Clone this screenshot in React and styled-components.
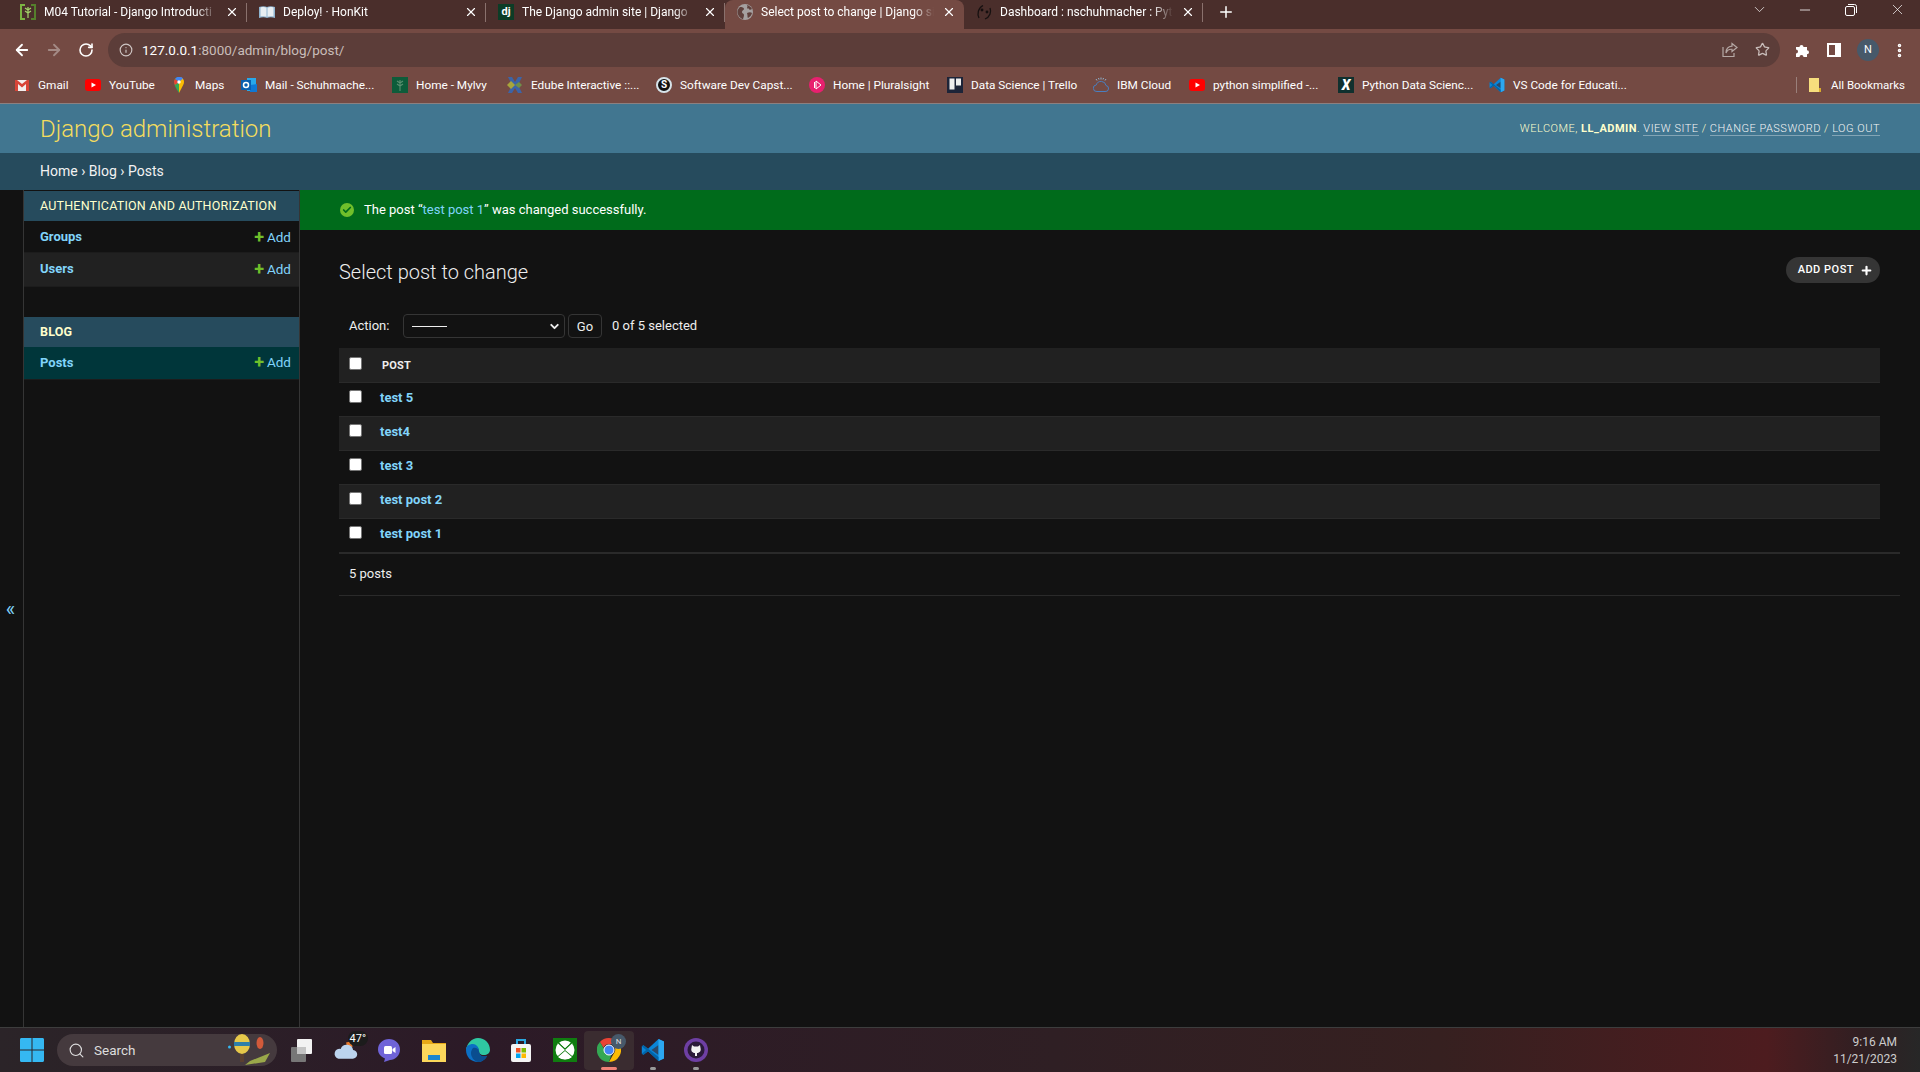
import React from "react";
import styled, { createGlobalStyle } from "styled-components";
import { ArrowLeft, ArrowRight, RotateCw, Info, Star, X, Plus, Minus, ChevronDown, EllipsisVertical, Search, Check } from "lucide-react";

const tabs = [
  { title: "M04 Tutorial - Django Introducti", icon: "tree" },
  { title: "Deploy! · HonKit", icon: "book" },
  { title: "The Django admin site | Django", icon: "dj" },
  { title: "Select post to change | Django si", icon: "globe", active: true },
  { title: "Dashboard : nschuhmacher : Pyt", icon: "swirl" },
];

const bookmarks = [
  { label: "Gmail", icon: "gmail", w: 71 },
  { label: "YouTube", icon: "youtube", w: 86 },
  { label: "Maps", icon: "maps", w: 70 },
  { label: "Mail - Schuhmache...", icon: "outlook", w: 151 },
  { label: "Home - Mylvy", icon: "mylvy", w: 115 },
  { label: "Edube Interactive ::...", icon: "edube", w: 149 },
  { label: "Software Dev Capst...", icon: "skype", w: 153 },
  { label: "Home | Pluralsight", icon: "pluralsight", w: 138 },
  { label: "Data Science | Trello", icon: "trello", w: 146 },
  { label: "IBM Cloud", icon: "ibm", w: 96 },
  { label: "python simplified -...", icon: "youtube", w: 149 },
  { label: "Python Data Scienc...", icon: "x", w: 151 },
  { label: "VS Code for Educati...", icon: "vscode", w: 200 },
];

const posts = ["test 5", "test4", "test 3", "test post 2", "test post 1"];

function Logo({ name, size = 16 }) {
  switch (name) {
    case "tree":
      return (
        <svg width={size} height={size} viewBox="0 0 16 16">
          <path d="M5 1H1v14h4" fill="none" stroke="#7cb342" strokeWidth="2" />
          <path d="M11 1h4v14h-4" fill="none" stroke="#55802c" strokeWidth="2" />
          <path d="M8 14V3M8 6 5 4M8 6l3-2M8 9 5 7M8 9l3-2" stroke="#a5d66b" strokeWidth="1.200" fill="none" />
        </svg>
      );
    case "book":
      return (
        <svg width={size} height={size} viewBox="0 0 16 16">
          <path d="M0 3c3-1 6-1 8 0 2-1 5-1 8 0v11c-3-1-6-1-8 0-2-1-5-1-8 0z" fill="#8fb4d0" />
          <path d="M1.500 3.500c2-.6 4.500-.6 6 .2v9c-1.500-.7-4-.7-6-.2zM14.500 3.500c-2-.6-4.500-.6-6 .2v9c1.500-.7 4-.7 6-.2z" fill="#e8eef2" />
        </svg>
      );
    case "globe":
      return (
        <svg width={size} height={size} viewBox="0 0 16 16">
          <circle cx="8" cy="8" r="8" fill="#a5a0a0" />
          <path d="M3 3c2 0 4 .5 4 2s-2 1-2 3 2 1 2 3-1 3-1 4.500C3 14 0 11 .5 7 1 5 2 4 3 3zM10 1c2 .5 4 2 5 4-1 1-3 1-3 0s-2 0-2-1 1-1 0-3zM10 9c2-1 4-1 5 0-.5 2-2 4-4 5-1-1 0-2-1-5z" fill="#5f403c" />
        </svg>
      );
    case "swirl":
      return (
        <svg width={size} height={size} viewBox="0 0 16 16" fill="none" stroke="#161010" strokeWidth="1.300">
          <path d="M3 14C1 10 2 4 7 1.500M14 4c1.500 4 0 9-5 11" />
          <circle cx="6" cy="6" r=".8" fill="#161010" />
          <circle cx="11" cy="8" r=".8" fill="#161010" />
        </svg>
      );
    case "gmail":
      return (
        <svg width={size} height={size} viewBox="0 0 16 16">
          <path d="M1 3h14v11H1z" fill="#f3efee" />
          <path d="M1 14V3h2l5 4 5-4h2v11h-3V7L8 10.500 4 7v7z" fill="#d84437" />
        </svg>
      );
    case "youtube":
      return (
        <svg width={size} height={size} viewBox="0 0 16 16">
          <rect y="2" width="16" height="12" rx="3" fill="#f00" />
          <path d="M6.500 5.500 11 8l-4.500 2.500z" fill="#fff" />
        </svg>
      );
    case "maps":
      return (
        <svg width={size} height={size} viewBox="0 0 16 16">
          <path d="M8 0C5 0 3 2.300 3 5c0 4 5 11 5 11z" fill="#34a853" />
          <path d="M8 0c3 0 5 2.300 5 5 0 1-.3 2-.8 3L8 16z" fill="#fbbc04" />
          <path d="M4 2a5 5 0 0 1 8-.5L8 5z" fill="#4285f4" />
          <path d="M3 5c0-1 .3-2 1-3l4 3-4 3c-.6-1-1-2-1-3z" fill="#ea4335" />
          <circle cx="8" cy="5" r="1.700" fill="#fff" />
        </svg>
      );
    case "outlook":
      return (
        <svg width={size} height={size} viewBox="0 0 16 16">
          <path d="M6 1h9v13H6z" fill="#28a8ea" />
          <path d="M9 8l7-1v8H9z" fill="#0f78d4" />
          <rect y="3" width="10" height="10" fill="#0a5fb0" />
          <circle cx="5" cy="8" r="2.500" fill="none" stroke="#fff" strokeWidth="1.500" />
        </svg>
      );
    case "mylvy":
      return (
        <svg width={size} height={size} viewBox="0 0 16 16">
          <path d="M0 0h16v16H0z" fill="#0d5c3a" />
          <path d="M8 14V3M8 6 5 4M8 6l3-2M8 9 5 7M8 9l3-2" stroke="#5b8f70" strokeWidth="1.100" fill="none" />
        </svg>
      );
    case "edube":
      return (
        <svg width={size} height={size} viewBox="0 0 16 16">
          <path d="M1 0h4l3 5 3-5h4l-4 8 4 8h-4l-3-5-3 5H1l4-8z" fill="#3c64a8" />
          <path d="M0 8l4-4 4 4-4 4z" fill="#a8a53c" />
          <path d="M8 8l4-3 3 3-3 3z" fill="#6f8f4a" />
        </svg>
      );
    case "pluralsight":
      return (
        <svg width={size} height={size} viewBox="0 0 16 16">
          <circle cx="8" cy="8" r="8" fill="#e8206f" />
          <path d="M5.500 5v6M7 4l5 4-5 4z" stroke="#fff" fill="none" />
        </svg>
      );
    case "trello":
      return (
        <svg width={size} height={size} viewBox="0 0 16 16">
          <rect width="16" height="16" fill="#1d2438" />
          <rect x="2.500" y="1.500" width="5" height="11" fill="#eee" />
          <rect x="9" y="1.500" width="5" height="7" fill="#eee" />
        </svg>
      );
    case "ibm":
      return (
        <svg width={size} height={size} viewBox="0 0 16 16" fill="none" stroke="#4a7fc0" strokeWidth="1">
          <path d="M4 14.500h8a3 3 0 0 0 1-6 5 5 0 0 0-9.700-.6A3.300 3.300 0 0 0 4 14.500z" />
          <path d="M8 .5v2M3 2l1 1.500M13 2l-1 1.500M5.500 1l.5 1.500M10.500 1 10 2.500" stroke="#8fb4d0" />
        </svg>
      );
    case "vscode":
      return (
        <svg width={size} height={size} viewBox="0 0 24 24">
          <path d="M17.500 1 23 3.600v16.800L17.500 23 7 13.200 2.500 16.700.8 15.800V8.200l1.700-.9L7 10.800z" fill="#0a84d6" />
          <path d="M17.500 7 10.500 12l7 5z" fill="#3a2f38" opacity=".7" />
          <path d="M17.500 1 23 3.600v16.800L17.500 23z" fill="#2ca7f0" />
          <path d="M.8 8.200 2.500 7.300 17.500 19v4L7 13.200 2.500 16.700.8 15.800l4.300-3.800z" fill="#0065a9" />
        </svg>
      );
    case "folder":
      return (
        <svg width={size} height={size} viewBox="0 0 16 16">
          <path d="M2 1h10v14H2z" fill="#f7de7d" />
          <path d="M12 11h2v4h-2z" fill="#d9ab2d" />
        </svg>
      );
    case "windows":
      return (
        <svg width={size} height={size} viewBox="0 0 24 24">
          <path d="M0 1.500C0 .6.600 0 1.500 0h10v11.500H0zM12.500 0h10c.9 0 1.500.6 1.500 1.500v10H12.500zM0 12.500h11.500V24h-10C.6 24 0 23.400 0 22.500zM12.500 12.500H24v10c0 .9-.6 1.500-1.500 1.500h-10z" fill="#35b8f2" />
        </svg>
      );
    case "balloon":
      return (
        <svg width={size} height={size} viewBox="0 0 44 32">
          <path d="M22 27l20-8-5 9-20 3z" fill="#9aa84a" />
          <ellipse cx="14" cy="10" rx="8" ry="10" fill="#e6c84a" />
          <path d="M6 8h16v4H6z" fill="#2f7fa8" />
          <path d="M12 20h4v8h-4z" fill="#5a4030" />
          <ellipse cx="32" cy="9" rx="3.500" ry="6" fill="#d25a3a" />
          <circle cx="1.500" cy="13" r="1.500" fill="#35b8f2" />
        </svg>
      );
    case "taskview":
      return (
        <svg width={size} height={size} viewBox="0 0 24 24">
          <rect x="7" y="1" width="15" height="15" rx="1" fill="#f2f2f2" />
          <rect x="1" y="9" width="15" height="15" rx="1" fill="#777" />
          <rect x="7" y="9" width="9" height="7" fill="#c4c4c4" />
        </svg>
      );
    case "cloud":
      return (
        <svg width={size} height={size} viewBox="0 0 24 24">
          <path d="M13 5l5-1 1 5-5 1z" fill="#e8792b" />
          <path d="M6 20h13a4 4 0 0 0 .5-8 6 6 0 0 0-11.500-1A4.500 4.500 0 0 0 6 20z" fill="#bcd4ee" />
        </svg>
      );
    case "teams":
      return (
        <svg width={size} height={size} viewBox="0 0 24 24">
          <path d="M12 1c6 0 11 4.500 11 10.500S18 22 13 22l-6 2 1-3.500C4 19 1 15.500 1 11.500 1 5.500 6 1 12 1z" fill="#6f63d8" />
          <rect x="7" y="8" width="8" height="8" rx="1.500" fill="#fff" />
          <path d="M15.500 11l3-2v6l-3-2z" fill="#fff" />
        </svg>
      );
    case "explorer":
      return (
        <svg width={size} height={size} viewBox="0 0 24 24">
          <path d="M0 2h9l2 3h13v19H0z" fill="#e6a817" />
          <path d="M0 6h24v18H0z" fill="#fbd75b" />
          <rect x="6" y="17" width="12" height="5" fill="#1a86d0" />
        </svg>
      );
    case "edge":
      return (
        <svg width={size} height={size} viewBox="0 0 24 24">
          <path d="M12 0c7 0 12 5 12 12 0 3-3 5-6 5-4 0-5-2-5-4 0-3-3-5-6-5-3 0-6 2-7 4C1 5 6 0 12 0z" fill="#2fc8a2" />
          <path d="M0 12c0-4 3-6 7-6 3 0 6 3 6 7 0 3 2 7 8 5-2 4-6 6-9 6-7 0-12-5-12-12z" fill="#0c6fc4" />
          <path d="M7 10c2-1 5 0 6 3 0 3 2 7 8 5-2 4-6 6-9 6-4-1-7-5-7-9 0-2 1-4 2-5z" fill="#0a4d8f" />
        </svg>
      );
    case "store":
      return (
        <svg width={size} height={size} viewBox="0 0 24 24">
          <path d="M8 6V2h8v4" fill="none" stroke="#2aa7e0" strokeWidth="2" />
          <rect x="2" y="6" width="20" height="18" rx="2" fill="#f4f4f4" />
          <path d="M7 10h4.500v4.500H7z" fill="#f25022" />
          <path d="M12.500 10H17v4.500h-4.500z" fill="#7fba00" />
          <path d="M7 15.500h4.500V20H7z" fill="#00a4ef" />
          <path d="M12.500 15.500H17V20h-4.500z" fill="#ffb900" />
        </svg>
      );
    case "xbox":
      return (
        <svg width={size} height={size} viewBox="0 0 24 24">
          <rect width="24" height="24" fill="#107c10" />
          <circle cx="12" cy="12" r="9.500" fill="#fff" />
          <path d="M4 3.500 12 11l8-7.500M3 20.500 12 13l9 7.500" fill="none" stroke="#107c10" strokeWidth="1.600" />
          <path d="M12 10 7 5.500h10zM5 19l7-6 7 6c-4 3-10 3-14 0z" fill="#fff" />
        </svg>
      );
    case "chrome":
      return (
        <svg width={size} height={size} viewBox="0 0 24 24">
          <path d="M12 0a12 12 0 0 1 10.400 6H12a6 6 0 0 0-5.600 3.800L2.900 4A12 12 0 0 1 12 0z" fill="#ea4335" />
          <path d="M22.400 6A12 12 0 0 1 12 24l4.500-8A6 6 0 0 0 17 8z" fill="#fbbc04" />
          <path d="M2.900 4l4.800 8a6 6 0 0 0 7 3.500L12 24A12 12 0 0 1 2.900 4z" fill="#34a853" />
          <circle cx="12" cy="12" r="5" fill="#4285f4" stroke="#fff" strokeWidth="1" />
        </svg>
      );
    case "github":
      return (
        <svg width={size} height={size} viewBox="0 0 24 24">
          <circle cx="12" cy="12" r="12" fill="#6e3fa3" />
          <circle cx="12" cy="12" r="8.500" fill="#2a1a38" />
          <path d="M8 7l2 1.500h4L16 7l.5 3c.8 2.500-.5 5-3.500 5v3h-2v-3c-3 0-4.300-2.500-3.500-5z" fill="#f2f2f2" />
        </svg>
      );
    default:
      return null;
  }
}

function Favicon({ name }) {
  if (name === "dj") return <DjIcon>dj</DjIcon>;
  if (name === "skype") return <SkypeIcon>S</SkypeIcon>;
  if (name === "x") return <XIcon>X</XIcon>;
  return <Logo name={name} />;
}

function App() {
  return (
    <>
      <GlobalStyle />
      <Page>
        <TabStrip>
          {tabs.map((tab) => (
            <Tab key={tab.title} $active={tab.active}>
              <Favicon name={tab.icon} />
              <TabTitle>{tab.title}</TabTitle>
              <X size={14} strokeWidth={2} color="#fff" />
            </Tab>
          ))}
          <NewTab>
            <Plus size={18} strokeWidth={2} />
          </NewTab>
          <WindowControls>
            <ChevronDown size={17} strokeWidth={1} />
            <Minus size={16} strokeWidth={1.2} />
            <RestoreIcon />
            <X size={17} strokeWidth={1} />
          </WindowControls>
        </TabStrip>

        <Toolbar>
          <NavButton><ArrowLeft size={18} strokeWidth={2.4} /></NavButton>
          <NavButton $off><ArrowRight size={18} strokeWidth={2.4} /></NavButton>
          <NavButton><RotateCw size={16} strokeWidth={2.4} /></NavButton>
          <Omnibox>
            <Info size={14} color="#cfc6c4" />
            <Url>
              127.0.0.1<UrlRest>:8000/admin/blog/post/</UrlRest>
            </Url>
            <OmniActions>
              <ShareIcon />
              <Star size={15} color="#c9bdba" strokeWidth={2} />
            </OmniActions>
          </Omnibox>
          <ToolIcons>
            <PuzzleIcon />
            <SidePanelIcon />
            <Avatar>N</Avatar>
            <EllipsisVertical size={17} strokeWidth={3} color="#fff" />
          </ToolIcons>
        </Toolbar>

        <BookmarkBar>
          {bookmarks.map((b) => (
            <Bookmark key={b.label} $w={b.w}>
              <Favicon name={b.icon} />
              <span>{b.label}</span>
            </Bookmark>
          ))}
          <AllBookmarks>
            <Logo name="folder" />
            <span>All Bookmarks</span>
          </AllBookmarks>
        </BookmarkBar>

        <Header>
          <Branding>Django administration</Branding>
          <UserTools>
            WELCOME, <strong>LL_ADMIN</strong>. <UserLink>View site</UserLink> / <UserLink>Change password</UserLink> / <UserLink>Log out</UserLink>
          </UserTools>
        </Header>
        <Breadcrumbs>Home › Blog › Posts</Breadcrumbs>

        <Main>
          <ToggleColumn>«</ToggleColumn>
          <Sidebar>
            <ModuleCaption>Authentication and Authorization</ModuleCaption>
            <ModuleRow>
              <ModelLink>Groups</ModelLink>
              <AddLink><GreenPlus>+</GreenPlus>Add</AddLink>
            </ModuleRow>
            <ModuleRow $alt>
              <ModelLink>Users</ModelLink>
              <AddLink><GreenPlus>+</GreenPlus>Add</AddLink>
            </ModuleRow>
            <ModuleCaption $bold $gap>Blog</ModuleCaption>
            <ModuleRow $selected>
              <ModelLink>Posts</ModelLink>
              <AddLink><GreenPlus>+</GreenPlus>Add</AddLink>
            </ModuleRow>
          </Sidebar>

          <Content>
            <Message>
              <MessageIcon><Check size={10} strokeWidth={4} color="#006b1b" /></MessageIcon>
              <MessageText>The post “<MessageLink>test post 1</MessageLink>” was changed successfully.</MessageText>
            </Message>
            <ContentInner>
              <ContentHead>
                <Title>Select post to change</Title>
                <AddButton>
                  <AddLabel>Add post</AddLabel>
                  <Plus size={13} strokeWidth={4} color="#fff" />
                </AddButton>
              </ContentHead>
              <Actions>
                <ActionLabel>Action:</ActionLabel>
                <SelectBox>
                  <SelectDash />
                  <ChevronDown size={13} strokeWidth={3.5} color="#eee" />
                </SelectBox>
                <GoButton>Go</GoButton>
                <Counter>0 of 5 selected</Counter>
              </Actions>
              <PostTable>
                <thead>
                  <HeadRow>
                    <CheckCell as="th" $head><FakeCheck /></CheckCell>
                    <HeadCell>Post</HeadCell>
                  </HeadRow>
                </thead>
                <tbody>
                  {posts.map((post, i) => (
                    <PostRow key={post} $alt={i % 2 === 1}>
                      <CheckCell><FakeCheck /></CheckCell>
                      <TitleCell>{post}</TitleCell>
                    </PostRow>
                  ))}
                </tbody>
              </PostTable>
              <Paginator>5 posts</Paginator>
            </ContentInner>
          </Content>
        </Main>

        <Taskbar>
          <TaskLeft>
            <Logo name="windows" size={24} />
            <SearchPill>
              <Search size={17} color="#ddd" strokeWidth={1.6} />
              <span>Search</span>
              <BalloonSlot><Logo name="balloon" size={44} /></BalloonSlot>
            </SearchPill>
            <TaskApp $w={36}><Logo name="taskview" size={24} /></TaskApp>
            <TaskApp $w={50}>
              <Logo name="cloud" size={26} />
              <WeatherBadge>47°</WeatherBadge>
            </TaskApp>
            <TaskApp $w={38}><Logo name="teams" size={24} /></TaskApp>
            <TaskApp $w={52}><Logo name="explorer" size={24} /></TaskApp>
            <TaskApp $w={36}><Logo name="edge" size={24} /></TaskApp>
            <TaskApp $w={50}><Logo name="store" size={24} /></TaskApp>
            <TaskApp $w={38}><Logo name="xbox" size={24} /></TaskApp>
            <TaskApp $w={50} $active>
              <Logo name="chrome" size={24} />
              <ChromeBadge>N</ChromeBadge>
              <RunDot $active />
            </TaskApp>
            <TaskApp $w={38}>
              <Logo name="vscode" size={24} />
              <RunDot />
            </TaskApp>
            <TaskApp $w={48}>
              <Logo name="github" size={24} />
              <RunDot />
            </TaskApp>
          </TaskLeft>
          <Clock>
            <div>9:16 AM</div>
            <div>11/21/2023</div>
          </Clock>
        </Taskbar>
      </Page>
    </>
  );
}

export default App;

function RestoreIcon() {
  return (
    <svg width="12" height="12" viewBox="0 0 12 12" fill="none" stroke="#fff" strokeWidth="1">
      <rect x=".5" y="2.500" width="9" height="9" rx="1.500" />
      <path d="M3 .5h6.500a2 2 0 0 1 2 2V9" />
    </svg>
  );
}

function ShareIcon() {
  return (
    <svg width="16" height="16" viewBox="0 0 16 16" fill="none" stroke="#b5a8a5" strokeWidth="1.200">
      <path d="M1 5v9.500h11V11" />
      <path d="M10 1.500 15 5.500l-5 4V7.300C7 7 5 8.500 4 11c0-4 2.500-6.500 6-6.800z" />
    </svg>
  );
}

function PuzzleIcon() {
  return (
    <svg width="16" height="16" viewBox="0 0 16 16" fill="#fff">
      <path d="M1 5h3.500a2 2 0 1 1 4 0H12v3.200a2 2 0 1 1 0 4V15H8.500a2 2 0 1 0-4 0H1v-3.500a2 2 0 1 0 0-4z" />
    </svg>
  );
}

function SidePanelIcon() {
  return (
    <svg width="14" height="14" viewBox="0 0 14 14">
      <path d="M0 0h14v14H0z" fill="#fff" />
      <path d="M2 2h6v10H2z" fill="#744a43" />
    </svg>
  );
}

const GlobalStyle = createGlobalStyle`
  * {
    box-sizing: border-box;
  }
  html, body {
    margin: 0;
    padding: 0;
    background: #121212;
    font-family: Roboto, "Liberation Sans", sans-serif;
  }
`;
const Page = styled.div`
  display: flex;
  flex-direction: column;
  height: 100vh;
  overflow: hidden;
`;
const TabStrip = styled.div`
  display: flex;
  align-items: stretch;
  height: 29px;
  padding-left: 8px;
  background: #4a2e2b;
`;
const Tab = styled.div`
  display: flex;
  align-items: center;
  gap: 8px;
  width: 239px;
  padding: 0 8px 5px 12px;
  color: #fff;
  font-size: 12px;
  background: ${(p) => (p.$active ? "#744a43" : "transparent")};
  border-radius: ${(p) => (p.$active ? "8px 8px 0 0" : "0")};
  position: relative;
  &:after {
    content: "";
    position: absolute;
    right: 0;
    top: 3px;
    bottom: 7px;
    border-right: 1px solid ${(p) => (p.$active ? "transparent" : "#8a716d")};
  }
`;
const TabTitle = styled.span`
  flex: 1;
  overflow: hidden;
  white-space: nowrap;
  mask-image: linear-gradient(90deg, #000 88%, transparent);
`;
const DjIcon = styled.span`
  width: 16px;
  height: 16px;
  background: #0c3c26;
  color: #fff;
  font-size: 11px;
  font-weight: 700;
  line-height: 15px;
  text-align: center;
  flex: none;
`;
const SkypeIcon = styled.span`
  width: 16px;
  height: 16px;
  border-radius: 50%;
  background: #111;
  border: 2px solid #d7e4ea;
  color: #fff;
  font-size: 10px;
  font-weight: 700;
  line-height: 12px;
  text-align: center;
  flex: none;
`;
const XIcon = styled.span`
  width: 16px;
  height: 16px;
  background: #10302e;
  color: #fff;
  font-size: 14px;
  font-weight: 900;
  font-style: italic;
  line-height: 16px;
  text-align: center;
  flex: none;
`;
const NewTab = styled.div`
  display: flex;
  align-items: center;
  margin-left: 14px;
  padding-bottom: 5px;
  color: #fff;
`;
const WindowControls = styled.div`
  margin-left: auto;
  display: grid;
  grid-template-columns: repeat(4, 46px);
  justify-items: center;
  align-items: center;
  width: 184px;
  color: #fff;
  height: 19px;
`;
const Toolbar = styled.div`
  display: flex;
  align-items: center;
  height: 38px;
  padding: 4px 0 0 6px;
  background: #744a43;
`;
const NavButton = styled.div`
  width: 32px;
  display: flex;
  justify-content: center;
  color: ${(p) => (p.$off ? "#a48a85" : "#fff")};
`;
const Omnibox = styled.div`
  flex: 1;
  display: flex;
  align-items: center;
  height: 34px;
  margin-left: 6px;
  padding: 0 10px 0 11px;
  gap: 9px;
  background: #5c3d39;
  border-radius: 17px;
`;
const Url = styled.div`
  color: #fff;
  font-size: 13.5px;
`;
const UrlRest = styled.span`
  color: #c9bdba;
`;
const OmniActions = styled.div`
  margin-left: auto;
  display: flex;
  gap: 17px;
`;
const ToolIcons = styled.div`
  display: flex;
  align-items: center;
  gap: 16px;
  width: 140px;
  padding-left: 15px;
`;
const Avatar = styled.div`
  width: 22px;
  height: 22px;
  margin-right: -4px;
  border-radius: 50%;
  background: #47596a;
  color: #fff;
  font-size: 11px;
  line-height: 22px;
  text-align: center;
`;
const BookmarkBar = styled.div`
  display: flex;
  align-items: center;
  height: 37px;
  padding-left: 14px;
  background: #744a43;
  border-bottom: 1px solid #8c8080;
`;
const Bookmark = styled.div`
  display: flex;
  align-items: center;
  gap: 8px;
  width: ${(p) => p.$w}px;
  color: #fff;
  font-size: 11.8px;
  white-space: nowrap;
`;
const AllBookmarks = styled(Bookmark)`
  width: auto;
  margin-left: auto;
  margin-right: 15px;
  padding-left: 10px;
  height: 16px;
  font-size: 11.5px;
  border-left: 1px solid #9a7f7a;
`;
const Header = styled.div`
  display: flex;
  align-items: center;
  justify-content: space-between;
  height: 49px;
  padding: 0 40px;
  background: #417690;
`;
const Branding = styled.div`
  color: #f5dd5d;
  font-size: 24px;
  font-weight: 300;
`;
const UserTools = styled.div`
  color: #ffc;
  font-size: 11px;
  letter-spacing: 0.5px;
  font-weight: 300;
  strong {
    font-weight: 700;
  }
`;
const UserLink = styled.span`
  color: #f5f5f5;
  text-transform: uppercase;
  border-bottom: 1px solid rgba(255, 255, 255, 0.35);
`;
const Breadcrumbs = styled.div`
  display: flex;
  align-items: center;
  height: 37px;
  padding: 0 40px 2px;
  background: #264b5d;
  color: #f2f2f2;
  font-size: 14px;
`;
const Main = styled.div`
  flex: 1;
  display: flex;
  min-height: 0;
  background: #121212;
`;
const ToggleColumn = styled.div`
  display: flex;
  align-items: center;
  justify-content: center;
  width: 24px;
  padding-right: 2px;
  border-right: 1px solid #353535;
  color: #81d4fa;
  font-size: 20px;
`;
const Sidebar = styled.div`
  width: 276px;
  padding-top: 1px;
  border-right: 1px solid #353535;
`;
const ModuleCaption = styled.div`
  display: flex;
  align-items: center;
  height: 30px;
  padding: 0 0 2px 16px;
  margin-top: ${(p) => (p.$gap ? "30px" : "0")};
  background: #264b5d;
  color: #ffc;
  font-size: 12.5px;
  font-weight: ${(p) => (p.$bold ? 700 : 400)};
  letter-spacing: 0.2px;
  text-transform: uppercase;
`;
const ModuleRow = styled.div`
  display: flex;
  align-items: center;
  justify-content: space-between;
  height: ${(p) => (p.$selected ? 33 : p.$alt ? 34 : 32)}px;
  padding: 0 8px ${(p) => (p.$selected || p.$alt ? "2px" : "0")} 16px;
  font-size: 13px;
  background: ${(p) => (p.$selected ? "#00363a" : p.$alt ? "#212121" : "#121212")};
  border-bottom: 1px solid #1c1c1c;
`;
const ModelLink = styled.span`
  color: #81d4fa;
  font-weight: 700;
`;
const AddLink = styled.span`
  color: #81d4fa;
  font-size: 13.5px;
`;
const GreenPlus = styled.span`
  color: #70bf2b;
  font-size: 18px;
  font-weight: 700;
  line-height: 13px;
  margin-right: 3px;
  vertical-align: -1px;
`;
const Content = styled.div`
  flex: 1;
  min-width: 0;
`;
const Message = styled.div`
  display: flex;
  align-items: center;
  gap: 10px;
  height: 40px;
  padding-left: 40px;
  background: #006b1b;
  color: #fff;
  font-size: 13px;
`;
const MessageText = styled.span`
  margin-bottom: 2px;
`;
const MessageIcon = styled.span`
  display: flex;
  align-items: center;
  justify-content: center;
  width: 14px;
  height: 14px;
  border-radius: 50%;
  background: #70bf2b;
`;
const MessageLink = styled.span`
  color: #81d4fa;
`;
const ContentInner = styled.div`
  padding: 27px 20px 0 39px;
`;
const ContentHead = styled.div`
  display: flex;
  align-items: center;
  justify-content: space-between;
  height: 26px;
  margin-right: 20px;
  margin-bottom: 31px;
`;
const Title = styled.h1`
  margin: 3px 0 0;
  color: #eee;
  font-size: 20px;
  font-weight: 300;
`;
const AddButton = styled.div`
  display: flex;
  align-items: center;
  gap: 6px;
  height: 26px;
  padding: 0 7px 0 12px;
  border-radius: 13px;
  background: #353535;
  color: #fff;
  font-size: 11px;
  font-weight: 500;
  letter-spacing: 0.5px;
  text-transform: uppercase;
`;
const AddLabel = styled.span`
  margin-bottom: 1px;
`;
const Actions = styled.div`
  display: flex;
  align-items: center;
  height: 24px;
  padding-left: 10px;
  margin-bottom: 10px;
  color: #eee;
  font-size: 13px;
`;
const ActionLabel = styled.span`
  width: 54px;
  margin-bottom: 2px;
`;
const SelectBox = styled.div`
  display: flex;
  align-items: center;
  justify-content: space-between;
  width: 162px;
  height: 24px;
  padding: 0 3px 0 8px;
  background: #121212;
  border: 1px solid #353535;
  border-radius: 4px;
`;
const SelectDash = styled.span`
  width: 35px;
  border-top: 1px solid #eee;
`;
const GoButton = styled.div`
  width: 34px;
  height: 24px;
  margin: 0 10px 0 3px;
  border: 1px solid #353535;
  border-radius: 4px;
  color: #eee;
  font-size: 13px;
  line-height: 24px;
  text-align: center;
`;
const Counter = styled.span`
  margin-bottom: 2px;
`;
const PostTable = styled.table`
  width: calc(100% - 20px);
  border-collapse: collapse;
`;
const HeadRow = styled.tr`
  background: #212121;
`;
const CheckCell = styled.td`
  width: 41px;
  padding: 0 0 ${(p) => (p.$head ? "2px" : "5px")} 10px;
  text-align: left;
`;
const FakeCheck = styled.span`
  display: block;
  width: 13px;
  height: 13px;
  background: #fff;
  border: 1px solid #767676;
  border-radius: 2px;
`;
const HeadCell = styled.th`
  height: 34px;
  padding: 2px 0 0 2px;
  color: #eee;
  font-size: 11px;
  font-weight: 700;
  letter-spacing: 0.2px;
  text-align: left;
  text-transform: uppercase;
`;
const PostRow = styled.tr`
  height: 34px;
  background: ${(p) => (p.$alt ? "#212121" : "#121212")};
  border-top: 1px solid #2a2a2a;
`;
const TitleCell = styled.td`
  padding: 0 0 4px;
  color: #81d4fa;
  font-size: 13px;
  font-weight: 700;
`;
const Paginator = styled.div`
  display: flex;
  align-items: center;
  height: 44px;
  padding: 0 0 2px 10px;
  border-top: 2px solid #2a2a2a;
  border-bottom: 1px solid #2a2a2a;
  color: #eee;
  font-size: 13px;
`;
const Taskbar = styled.div`
  display: flex;
  align-items: center;
  justify-content: space-between;
  height: 45px;
  padding-left: 20px;
  border-top: 1px solid #3d3d3d;
  background: linear-gradient(90deg, #2b2428 0%, #2c1a27 25%, #2f1f24 55%, #362020 75%, #4d1c1f 92%, #301f22 97%, #272727 100%);
`;
const TaskLeft = styled.div`
  display: flex;
  align-items: center;
`;
const SearchPill = styled.div`
  display: flex;
  align-items: center;
  gap: 9px;
  width: 220px;
  height: 32px;
  margin: 0 7px 0 13px;
  padding-left: 11px;
  border-radius: 16px;
  background: #453a3e;
  color: #ddd;
  font-size: 13.5px;
  position: relative;
`;
const BalloonSlot = styled.span`
  position: absolute;
  right: 5px;
  top: -6px;
  line-height: 0;
`;
const TaskApp = styled.div`
  display: flex;
  justify-content: center;
  align-items: center;
  width: ${(p) => p.$w}px;
  height: 39px;
  position: relative;
  ${(p) => p.$active && "background: #3a2c30; border-radius: 4px;"}
`;
const WeatherBadge = styled.span`
  position: absolute;
  top: 0;
  right: 2px;
  padding: 1px 2px;
  border-radius: 8px;
  background: #1c1c1c;
  color: #fff;
  font-size: 11px;
`;
const ChromeBadge = styled.span`
  position: absolute;
  top: 3px;
  right: 8px;
  width: 15px;
  height: 15px;
  border-radius: 50%;
  background: #47596a;
  color: #ddd;
  font-size: 8px;
  line-height: 15px;
  text-align: center;
`;
const RunDot = styled.span`
  position: absolute;
  bottom: 0;
  left: 50%;
  width: ${(p) => (p.$active ? 16 : 6)}px;
  height: 3px;
  transform: translateX(-50%);
  border-radius: 2px;
  background: ${(p) => (p.$active ? "#ef8277" : "#999")};
`;
const Clock = styled.div`
  padding: 2px 23px 0 0;
  color: #ccc;
  font-size: 12px;
  line-height: 17px;
  text-align: right;
`;
